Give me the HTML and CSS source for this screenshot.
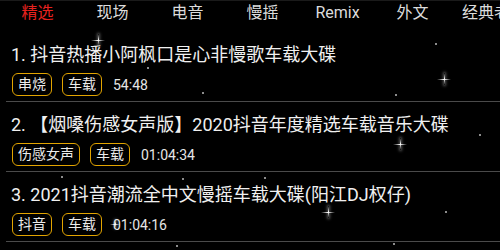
FILE: index.html
```html
<!DOCTYPE html>
<html lang="zh-CN">
<head>
<meta charset="utf-8">
<title>车载音乐</title>
<link rel="stylesheet" href="styles.css">
</head>
<body>
<div class="screen">
  <nav class="tabs">
    <div class="tab active">精选</div>
    <div class="tab">现场</div>
    <div class="tab">电音</div>
    <div class="tab">慢摇</div>
    <div class="tab">Remix</div>
    <div class="tab">外文</div>
    <div class="tab">经典老歌</div>
  </nav>
  <ul class="list">
    <li class="item">
      <div class="title">1. 抖音热播小阿枫口是心非慢歌车载大碟</div>
      <div class="meta"><span class="tag">串烧</span><span class="tag">车载</span><span class="time">54:48</span></div>
    </li>
    <li class="item">
      <div class="title">2. 【烟嗓伤感女声版】2020抖音年度精选车载音乐大碟</div>
      <div class="meta"><span class="tag">伤感女声</span><span class="tag">车载</span><span class="time">01:04:34</span></div>
    </li>
    <li class="item">
      <div class="title">3. 2021抖音潮流全中文慢摇车载大碟(阳江DJ权仔)</div>
      <div class="meta"><span class="tag">抖音</span><span class="tag">车载</span><span class="time">01:04:16</span></div>
    </li>
  </ul>
  <div class="sky">
    <span class="spark" style="left:98px;top:40px"></span>
    <span class="spark" style="left:444px;top:79px"></span>
    <span class="spark" style="left:400px;top:144px"></span>
    <span class="spark small" style="left:115px;top:224px"></span>
    <span class="spark" style="left:328px;top:212px"></span>
    <span class="dot" style="left:148px;top:68px"></span>
    <span class="dot" style="left:203px;top:93px"></span>
    <span class="dot" style="left:436px;top:44px"></span>
    <span class="dot" style="left:396px;top:95px"></span>
    <span class="dot" style="left:480px;top:135px"></span>
    <span class="dot" style="left:62px;top:177px"></span>
    <span class="dot" style="left:183px;top:179px"></span>
    <span class="dot" style="left:177px;top:246px"></span>
    <span class="dot" style="left:265px;top:178px"></span>
    <span class="dot" style="left:446px;top:212px"></span>
    <span class="dot" style="left:394px;top:244px"></span>
  </div>
</div>
</body>
</html>
```

FILE: styles.css
```css
html, body {
  margin: 0;
  padding: 0;
  background: #000;
}

.screen {
  position: relative;
  width: 500px;
  height: 250px;
  overflow: hidden;
  background: #000;
  font-family: Roboto, "Noto Sans CJK SC", sans-serif;
}

.tabs {
  display: flex;
  flex-wrap: nowrap;
  height: 32px;
  box-sizing: border-box;
  border-top: 1px solid #1a1a1a;
}

.tab {
  flex: 0 0 auto;
  min-width: 75px;
  box-sizing: border-box;
  padding: 0 12px;
  text-align: center;
  font-size: 16px;
  line-height: 24px;
  color: #dcdcdc;
  white-space: nowrap;
}

.tab.active {
  color: #e8221f;
}

.list {
  list-style: none;
  margin: 0 0 0 6px;
  padding: 0;
}

.item {
  padding: 11px 0 5px 6px;
  border-bottom: 1px solid #4a4a4a;
}

.title {
  margin-left: -1px;
  font-size: 18px;
  line-height: 24px;
  color: #f0f0f0;
  white-space: nowrap;
}

.meta {
  display: flex;
  align-items: center;
  gap: 10px;
  margin-top: 6px;
}

.tag {
  font-size: 14px;
  line-height: 21px;
  padding: 0 5px;
  border: 1.5px solid #e2a400;
  border-radius: 6px;
  color: #ececec;
}

.time {
  margin-left: 1px;
  font-size: 14px;
  color: #e6e6e6;
}

.sky {
  position: absolute;
  inset: 0;
  pointer-events: none;
}

.dot {
  position: absolute;
  width: 2px;
  height: 2px;
  margin: -1px 0 0 -1px;
  border-radius: 50%;
  background: #bbb;
}

.spark {
  position: absolute;
  width: 0;
  height: 0;
}

.spark::before,
.spark::after {
  content: "";
  position: absolute;
}

.spark::before {
  left: -7px;
  top: -0.5px;
  width: 14px;
  height: 1px;
  background: linear-gradient(90deg, transparent, #fff 50%, transparent);
}

.spark::after {
  left: -0.5px;
  top: -6px;
  width: 1px;
  height: 12px;
  background: linear-gradient(180deg, transparent, #fff 50%, transparent);
  box-shadow: 0 0 3px 1px rgba(255, 255, 255, 0.35);
}

.spark.small::before {
  left: -5px;
  width: 10px;
}

.spark.small::after {
  top: -4px;
  height: 8px;
}
```
